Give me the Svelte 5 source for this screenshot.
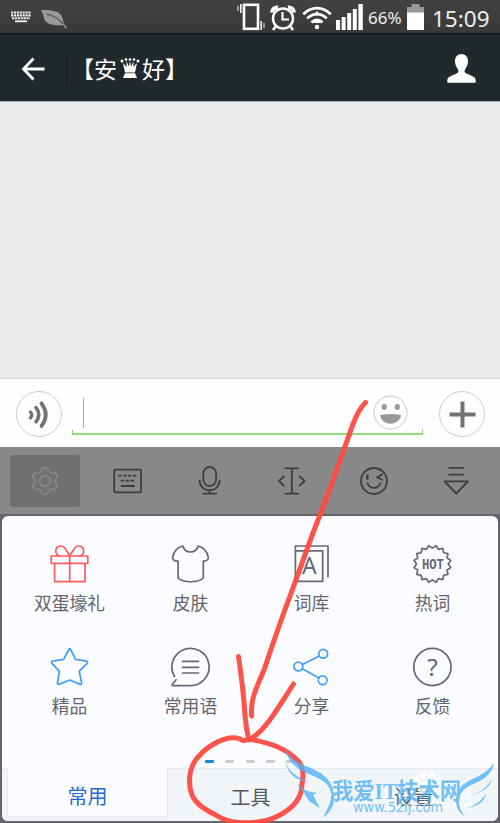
<script>
	const tabs = ['常用', '工具', '设置']
	const items = [
		{ icon: 'gift', label: '双蛋壕礼' },
		{ icon: 'shirt', label: '皮肤' },
		{ icon: 'book', label: '词库' },
		{ icon: 'hot', label: '热词' },
		{ icon: 'star', label: '精品' },
		{ icon: 'phrase', label: '常用语' },
		{ icon: 'share', label: '分享' },
		{ icon: 'help', label: '反馈' }
	]
	const tools = ['gear', 'keyboard', 'mic', 'cursor', 'wink', 'hide']

	let activeTab = $state(0)
	let activeTool = $state('gear')

	const ring = (cx, cy, count, fn) =>
		Array.from({ length: count }, (_, i) => {
			const [r, a] = fn(i)
			return `${(cx + r * Math.cos(a)).toFixed(2)},${(cy + r * Math.sin(a)).toFixed(2)}`
		}).join(' ')

	const badge = ring(20.2, 20, 32, (i) => [i % 2 ? 18.7 : 15.9, (i * Math.PI) / 16])
	const gear = ring(16, 16, 72, (i) => {
		const a = (i * Math.PI) / 36
		const wave = Math.cos(6 * (a + Math.PI / 2))
		return [11.6 - 1.6 * Math.tanh(wave * -1.8 - 0.3), a]
	})
</script>

<div class="phone">
	<header class="status">
		<svg class="kb" width="20" height="12" viewBox="0 0 20 12" fill="none" stroke="#eee">
			<path d="M0 1.5h20M0 4.4h20M1 7.3h18" stroke-width="2.1" stroke-dasharray="2.2 .7" />
			<path d="M4 10.3h12" stroke-width="1.8" />
		</svg>
		<svg class="leaf" width="26" height="20" viewBox="0 0 26 20">
			<path d="M0 1C8 1 16 1 20 6c2 3 2 6 3 9l3 4-1 1-3-4C12 17 4 15 3 9 2 5 1 3 0 1z" fill="#999" />
			<path d="M5 5c6 1 12 4 17 10" fill="none" stroke="#4a4a4a" stroke-width="1.2" />
		</svg>
		<svg class="vibrate" width="28" height="28" viewBox="0 0 28 28" fill="none" stroke="#fff">
			<rect x="7" y="1.8" width="14" height="24" stroke-width="2.6" />
			<path d="M3.8 1v9M24.2 18v9" stroke-width="1.5" />
			<path d="M1 3v5M27 20v5" stroke-width="1.3" stroke="#ccc" />
		</svg>
		<svg class="alarm" width="26" height="26" viewBox="0 0 26 26" fill="none" stroke="#fff">
			<circle cx="13" cy="13.5" r="10" stroke-width="2.4" />
			<path d="M12.5 7v7.5H19" stroke-width="2.2" />
			<path d="M2 7.5C2 4 5 2 8 2.5M18 2.5c3-.5 6 1.5 6 5" stroke-width="4" />
			<path d="M6 21l-3 4M20 21l3 4" stroke-width="2.6" />
		</svg>
		<svg class="wifi" width="30" height="24" viewBox="0 0 30 24" fill="none" stroke="#fff" stroke-width="2.8">
			<path d="M1.3 8.2C9 .1 21 .1 28.7 8.2M5.2 12.4c5.6-5.8 14-5.8 19.6 0M9.5 16.5c3.3-3.4 7.7-3.4 11 0" />
			<path d="M11.5 9.300h7L15 5zM11.5 17h7l-3.500-4z" fill="#fff" stroke="none" />
			<circle cx="15" cy="21" r="2.2" fill="#fff" stroke="none" />
		</svg>
		<svg class="signal" width="27" height="26" viewBox="0 0 27 26" fill="#fff">
			<path d="M0 16h4v10H0zM5.6 13h4v13h-4zM11.2 9h4v17h-4zM16.8 5h4v21h-4zM22.4 0h4.4v26h-4.4z" />
		</svg>
		<span class="percent">66%</span>
		<svg class="battery" width="17" height="26" viewBox="0 0 17 26">
			<path d="M4.500 0h8v3H17v6H0V3h4.500z" fill="#999" />
			<path d="M0 8.500h17V26H0z" fill="#fff" />
		</svg>
		<time>15:09</time>
	</header>

	<nav class="title">
		<svg class="back" width="24" height="24" viewBox="0 0 24 24" fill="none" stroke="#fff" stroke-width="2.8">
			<path d="M12.500 1.500L2.500 12l10 10.500M2.500 12h21" />
		</svg>
		<span class="rule"></span>
		<h1>
			【安<svg width="20" height="20" viewBox="0 0 20 20" fill="#fff">
				<path d="M5 14.500L3 5 6.800 9 6.200 3 9 8.500 10 2.500l1 6L13.800 3l-.6 6L17 5l-2 9.500zM5 15.300h10l2 4.700H3z" />
				<circle cx="2" cy="3" r="1.500" /><circle cx="6" cy="1.500" r="1.300" />
				<circle cx="10" cy="1.500" r="1.300" /><circle cx="14" cy="1.500" r="1.300" />
				<circle cx="18" cy="3" r="1.500" />
			</svg>好】
		</h1>
		<svg class="contact" width="29" height="29" viewBox="0 0 29 29" fill="#fff">
			<path d="M14.500 0C18.500 0 21 3 21 7c0 4-1.500 6-3 8.500-.8 1.500-.5 3 1 3.700l7 3.300c2.500 1.200 3 3.300 2.700 5.500-.1.600-.6.800-1.200.8h-26C.8 28.800.4 28.600.3 28 0 25.800.5 23.700 3 22.500l7-3.300c1.500-.7 1.800-2.200 1-3.700C9.500 13 8 11 8 7c0-4 2.500-7 6.500-7z" />
		</svg>
	</nav>

	<main></main>

	<section class="compose">
		<button class="round" aria-label="语音">
			<svg width="43" height="43" viewBox="0 0 43 43" fill="none" stroke="#737373" stroke-linecap="round">
				<path d="M12.500 19q2.500 3 0 6" stroke-width="3.200" />
				<path d="M18 14.500q5.500 7.200 0 14.400" stroke-width="3.500" />
				<path d="M23.500 10.300q8.500 11.500 0 22.600" stroke-width="3.800" />
			</svg>
		</button>
		<div class="field">
			<span class="caret"></span>
			<svg class="smile" width="35" height="35" viewBox="0 0 35 35" fill="#999">
				<circle cx="17.500" cy="17.500" r="16.500" fill="none" stroke="#ccc" />
				<ellipse cx="11.200" cy="12" rx="2.600" ry="3" /><ellipse cx="24.300" cy="12" rx="2.600" ry="3" />
				<path d="M7 20q10.500-2 21 0c-.6 5-5 8.700-10.500 8.700S7.600 25 7 20z" />
			</svg>
		</div>
		<button class="round" aria-label="更多">
			<svg width="43" height="43" viewBox="0 0 43 43" stroke="#737373" stroke-width="4">
				<path d="M21.500 8.500v26M8.500 21.500h26" />
			</svg>
		</button>
	</section>

	<section class="tools">
		{#each tools as tool}
			<button data-active={activeTool === tool} aria-label={tool} onclick={() => (activeTool = tool)}>
				<svg width="32" height="32" viewBox="0 0 32 32" fill="none" stroke="#3d3d3d" stroke-width="1.800" stroke-linecap="round" stroke-linejoin="round">
					{#if tool === 'gear'}
						<polygon points={gear} stroke="#858585" />
						<circle cx="16" cy="16" r="5.300" stroke="#858585" />
					{:else if tool === 'keyboard'}
						<rect x="3.200" y="4.700" width="26.800" height="22.600" rx="1" />
						<path d="M7.800 10.700h2M12.800 10.700h2M17.800 10.700h2M22.800 10.700h2M10.300 15.700h2M15.300 15.700h2M20.300 15.700h2M10.500 21H23" />
					{:else if tool === 'mic'}
						<rect x="10.300" y="2" width="12.800" height="19" rx="6.400" />
						<path d="M6.600 15.500c.3 13 19.700 13 20 0M16.600 25.500v3.200M10.300 28.700h12.800" />
					{:else if tool === 'cursor'}
						<path d="M9.500 3.400h12.700M15.800 3.400v25.200M9.500 28.600h12.700M7.800 11.300L2.900 16l4.900 4.700M23.600 11.300l4.900 4.700-4.900 4.700" />
					{:else if tool === 'wink'}
						<circle cx="16" cy="16" r="13" />
						<path d="M9.300 10.800v2.600" stroke-width="2.600" />
						<path d="M24.300 9.400L19 12.300l5.300 2.500M9.500 18.300c2.500 6 10.300 6 12.800 0" />
					{:else}
						<path d="M9.300 2.800h14M9.300 9.700h14M4.500 16.400H28L16.300 28.500z" />
					{/if}
				</svg>
			</button>
		{/each}
	</section>

	<section class="frame">
		<div class="panel">
			<div class="grid">
				{#each items as { icon, label }}
					<div class="item">
						<svg width="40" height="40" viewBox="0.8 0 40 40" fill="none" stroke="#66667a" stroke-width="1.700" stroke-linecap="round" stroke-linejoin="round">
							{#if icon === 'gift'}
								<g stroke="#ff5c5f">
									<path d="M2 12h36.600v7.300H2zM5.400 19.300h30.400v18.300H5.400zM20.500 12v25.600" />
									<path d="M10 11.800C6.500 10.500 5.500 7 7.500 4c2-3 6.500-2.500 8.500.5 1.700 2.500 3 5 4.500 7 1.500-2 3-4.500 4.700-7 2-3 6.300-3.500 8.300-.5s1 6.500-2.500 7.800" />
								</g>
							{:else if icon === 'shirt'}
								<path d="M12.800 2c1.700 8 13.300 8 15 0 6 1.500 9.400 6 10.300 11.300.4 2.400-2 4-5 3.700v17c-5 5-20.300 5-25.200 0V17c-3 .3-5.900-1.300-5.500-3.700C3.300 8 6.800 3.500 12.800 2z" />
							{:else if icon === 'book'}
								<path d="M4.200 6.900h27.300v30.400H4.200zM4.200 6.900V2h32.600v30.700" />
								<text x="18.200" y="30" font-size="23" textLength="16">A</text>
							{:else if icon === 'hot'}
								<polygon points={badge} />
								<text class="hot" x="20.700" y="25.200" font-size="14.500" textLength="22" lengthAdjust="spacingAndGlyphs">HOT</text>
							{:else if icon === 'star'}
								<path stroke="#439df8" d="M19.600 2.500q.9-1.700 1.800 0l5 9.800 11 1.900q1.600.5.600 1.900l-8 8.200 2.500 11.800q0 1.700-1.500 1.300L20.500 33l-10.800 4.400q-1.500.2-1.500-1.300l2-11.800-7.700-8.200q-1-1.500.6-1.900l11.400-1.900z" />
							{:else if icon === 'phrase'}
								<path d="M4.300 29.500A18.600 18.600 0 1 1 20.200 38.600H2.700q-1.400-.2-.5-1.400l3.700-4.400" />
								<path d="M12.400 14.300h16M12.400 20.300h16M12.400 26h16" />
							{:else if icon === 'share'}
								<g stroke="#439df8">
									<circle cx="7.200" cy="19.500" r="4.400" /><circle cx="32" cy="6.800" r="4.400" /><circle cx="31.500" cy="33.200" r="4.400" />
									<path d="M11.200 17.600L28 8.900M11.100 21.700l16.600 9.200" />
								</g>
							{:else}
								<circle cx="20.200" cy="20" r="18.600" />
								<text x="20.200" y="28.500" font-size="24">?</text>
							{/if}
						</svg>
						<span>{label}</span>
					</div>
				{/each}
			</div>
			<div class="pager">
				{#each [0, 1, 2, 3, 4] as page}
					<i data-active={page === 0}></i>
				{/each}
			</div>
			<div class="tabs">
				{#each tabs as tab, idx}
					<button data-active={activeTab === idx} onclick={() => (activeTab = idx)}>{tab}</button>
				{/each}
			</div>
		</div>
	</section>

	<svg class="overlay" width="500" height="823" viewBox="0 0 500 823">
		<g class="baidu" fill="#fff" opacity=".75">
			<ellipse cx="417" cy="780" rx="3" ry="4" /><ellipse cx="423.500" cy="774.500" rx="3" ry="4.300" />
			<ellipse cx="431.500" cy="774.500" rx="3" ry="4.300" /><ellipse cx="438" cy="781" rx="3" ry="4" />
			<path d="M427.500 780c4 0 9 6 9 10s-5 4-9 4-9 0-9-4 5-10 9-10z" />
			<text x="383" y="798" font-size="19" textLength="32">Bai</text>
			<text x="437" y="798" font-size="18" textLength="35">经验</text>
			<text x="386" y="809" font-size="10" textLength="87">jingyan.baidu.com</text>
		</g>
		<g class="ink">
			<path d="M365.500 402.500C359 409 356 416 353 424C341 458 329 492 318 520C309 543 301 566 293 588C282 617 272 646 264 670C257 687 250 699 251.700 716" />
			<path d="M238.500 656.500C242 680 244 700 245 715C246 729 247 732 249 740C265 731 276 711 293.500 684" />
			<path d="M249 739C245 741 242 741 240 739C228 734 208 745 198 757C188 768 188 785 192 795C197 807 213 813 221 818C238 826 265 823 278 816C292 809 302 799 302 784C304 774 303 767 299 762C286 747 266 742 249 739" />
		</g>
		<g class="mark">
			<path d="M285 748c5 14 20 17 30 22 10 5 19 12 19 28 0 9-5 16-11 19 4-7 9-16 8-24-2-12-15-16-25-20-12-5-19-14-21-25z" />
			<path d="M285 759c2 12 11 18 24 23-14-1-23-10-24-23zM297 783c4 6 11 9 20 10l-4 2 7 13c-8-4-14-9-16-16-4-3-6-6-7-9z" />
			<path d="M494 763c-2 11-10 17-23 22-9 4-13 11-12 19 1 5 3 9 6 12-6-3-9-8-9-16 0-11 7-17 17-21 10-5 16-9 21-16z" />
			<path d="M492 779c-2 8-9 13-20 16 9-3 15-8 20-16zM486 794c-2 8-8 12-18 14 8-3 13-7 18-14z" />
			<text class="name" x="332" y="798.500" textLength="129" lengthAdjust="spacingAndGlyphs">我爱IT技术网</text>
			<text class="site" x="353" y="812" textLength="90" lengthAdjust="spacingAndGlyphs">www.52ij.com</text>
		</g>
	</svg>
</div>

<style>
	:global(body) {
		margin: 0;
	}

	.phone {
		width: 500px;
		height: 823px;
		display: flex;
		flex-direction: column;
		position: relative;
		overflow: hidden;
		background: #ebebeb;
		font-family: 'Noto Sans CJK SC', sans-serif;
	}

	svg {
		display: block;
		flex: none;
	}

	button {
		padding: 0;
		border: none;
		background: none;
		font: inherit;
		cursor: pointer;
	}

	.status {
		height: 33px;
		flex: none;
		display: flex;
		align-items: flex-start;
		border-bottom: 2px solid #161a1b;
		background: linear-gradient(#424242, #393939);
		color: #eee;
		font-family: 'Noto Sans', sans-serif;
	}

	.kb {
		margin: 11px 10px 0 11px;
	}

	.leaf {
		margin-top: 9px;
	}

	.vibrate {
		margin: 3px 5px 0 auto;
	}

	.alarm {
		margin: 5px 6px 0 0;
	}

	.wifi {
		margin: 6px 4px 0 0;
	}

	.signal {
		margin: 4px 5px 0 0;
	}

	.percent {
		width: 39px;
		font-size: 17px;
		line-height: 36px;
	}

	.battery {
		margin: 4px 8px 0 0;
	}

	time {
		width: 68px;
		font-size: 22.500px;
		line-height: 37px;
	}

	.title {
		height: 66px;
		flex: none;
		display: flex;
		align-items: center;
		background: #22292c;
		color: #fff;
	}

	.back {
		margin: 2px 0 0 21px;
	}

	.rule {
		width: 1px;
		height: 33px;
		margin: 0 4px 0 21px;
		background: #151a1c;
	}

	h1 {
		margin: 0;
		display: flex;
		align-items: center;
		font-size: 23px;
		font-weight: 400;
		line-height: 30px;
	}

	h1 svg {
		margin: 0 2px 0 3px;
	}

	.contact {
		margin: 0 24px 0 auto;
	}

	main {
		flex: 1;
		border-top: 1px solid #b0b2b3;
		background: #ebebeb;
	}

	.compose {
		height: 69px;
		box-sizing: border-box;
		flex: none;
		display: flex;
		align-items: center;
		justify-content: space-between;
		padding: 2px 15px 0 16px;
		border-top: 1px solid #d8d8d8;
		background: #fefefe;
	}

	.round {
		width: 46px;
		height: 46px;
		box-sizing: border-box;
		display: grid;
		place-items: center;
		border: 1px solid #ccc;
		border-radius: 50%;
	}

	.field {
		width: 351px;
		height: 43px;
		box-sizing: border-box;
		margin: 0 6px 1px 0;
		padding: 0 15px 0 11px;
		display: flex;
		align-items: center;
		justify-content: space-between;
		background:
			linear-gradient(#7ed863, #7ed863) 0 100% / 1px 5px no-repeat,
			linear-gradient(#7ed863, #7ed863) 100% 100% / 1px 5px no-repeat,
			linear-gradient(#8edd78, #8edd78) 0 100% / 100% 2px no-repeat;
	}

	.caret {
		width: 1px;
		height: 30px;
		margin-bottom: 1px;
		background: #aaa;
	}

	.smile {
		margin-bottom: 2px;
	}

	.tools {
		height: 67px;
		flex: none;
		display: grid;
		grid-template-columns: repeat(6, 82.2px);
		align-items: center;
		justify-items: center;
		padding-left: 4px;
		background: #888;
	}

	.tools button {
		width: 70px;
		height: 52px;
		display: grid;
		place-items: center;
		border-radius: 3px;
	}

	.tools button[data-active='true'] {
		background: #707070;
	}

	.frame {
		height: 309px;
		box-sizing: border-box;
		flex: none;
		padding: 2px 2px 2px;
		background: #65666b;
	}

	.panel {
		height: 305px;
		box-sizing: border-box;
		overflow: hidden;
		border-radius: 6px;
		background: #fbfcff;
	}

	.grid {
		height: 244px;
		box-sizing: border-box;
		padding: 28px 5px 0 7px;
		display: grid;
		grid-template-columns: repeat(4, 121px);
		grid-auto-rows: 103px;
	}

	.item {
		display: flex;
		flex-direction: column;
		align-items: center;
		color: #64646f;
		font-size: 17.800px;
		line-height: 26px;
	}

	.item span {
		margin-top: 5px;
	}

	.item text {
		fill: #66667a;
		stroke: none;
		font-family: 'Noto Sans', sans-serif;
		text-anchor: middle;
	}

	.item .hot {
		font-family: 'Liberation Mono', monospace;
		font-weight: 700;
	}

	.pager {
		height: 8px;
		padding-left: 203px;
		display: flex;
		gap: 11.300px;
	}

	.pager i {
		width: 9px;
		height: 3px;
		border-radius: 1px;
		background: #ccc;
	}

	.pager i[data-active='true'] {
		background: #198ad2;
	}

	.tabs {
		height: 53px;
		box-sizing: border-box;
		display: grid;
		grid-template-columns: 161px 165px 161px;
		padding: 0 4px 4px 5px;
		border-top: 1px solid #e6eaed;
		background: #f1f5f8;
	}

	.tabs button {
		padding-top: 8px;
		color: #555761;
		font-size: 20px;
		line-height: 38px;
	}

	.tabs button[data-active='true'] {
		margin-top: -1px;
		border: 1px solid #e6eaed;
		border-top: none;
		background: #fbfcff;
		color: #2868d5;
	}

	.overlay {
		position: absolute;
		top: 0;
		left: 0;
		pointer-events: none;
	}

	.baidu {
		font-family: 'Noto Sans CJK SC', sans-serif;
		font-weight: 700;
	}

	.ink {
		fill: none;
		stroke: #ff4a42;
		stroke-width: 5;
		stroke-linecap: round;
		stroke-linejoin: round;
		opacity: 0.95;
	}

	.mark {
		fill: #4db2f5;
		opacity: 0.78;
	}

	.name {
		font-family: 'Liberation Serif', 'Noto Sans CJK SC', serif;
		font-size: 23px;
		font-weight: 700;
	}

	.site {
		font-family: 'DejaVu Sans', sans-serif;
		font-size: 14px;
	}
</style>
